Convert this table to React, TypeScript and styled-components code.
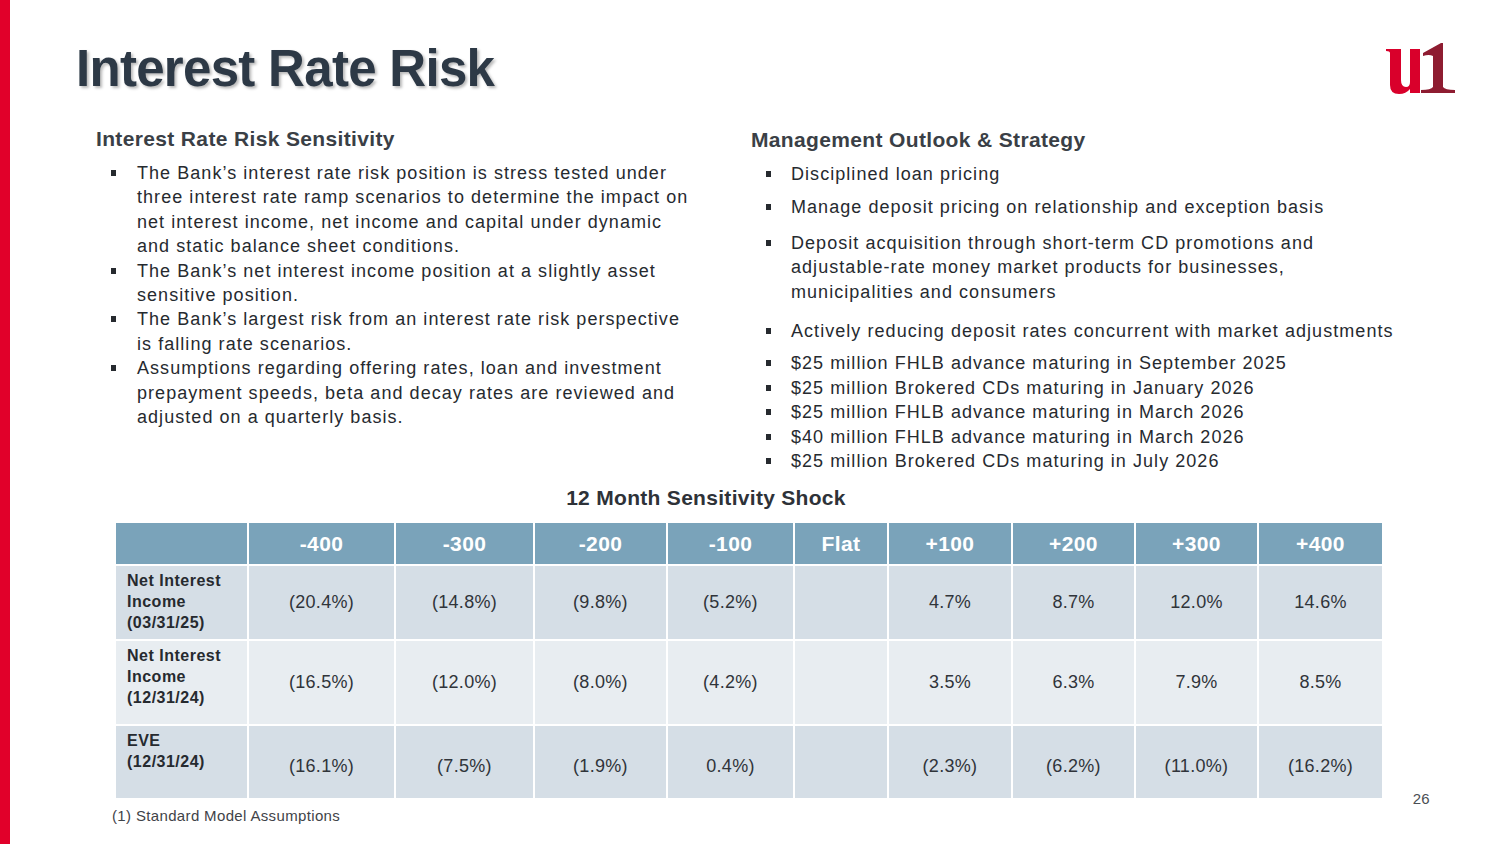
import styled, { createGlobalStyle } from 'styled-components'

const GlobalStyle = createGlobalStyle`
    html, body {
        margin: 0;
        padding: 0;
        background: #ffffff;
    }
    body {
        font-family: "Liberation Sans", Arial, sans-serif;
        color: #262a2f;
    }
`

const Slide = styled.div`
    display: flex;
    width: 1500px;
    height: 844px;
    overflow: hidden;
    background: #ffffff;
`

const RedBar = styled.div`
    width: 10px;
    flex: none;
    background: #e1002a;
`

const Content = styled.div`
    flex: 1;
    display: flex;
    flex-direction: column;
`

const Header = styled.div`
    display: flex;
    justify-content: space-between;
    align-items: flex-start;
    padding: 43px 43px 0 66px;
`

const Title = styled.h1`
    margin: 0;
    font-size: 51px;
    line-height: 51px;
    font-weight: 700;
    letter-spacing: -0.7px;
    color: #2d3946;
    text-shadow: 2px 2px 3px rgba(0, 0, 0, 0.28);
`

const Columns = styled.div`
    display: grid;
    grid-template-columns: 655px 1fr;
    margin-top: 32px;
    padding-left: 86px;
`

const Column = styled.div`
    display: flex;
    flex-direction: column;
`

const SectionHeading = styled.h2<{ $top?: number }>`
    margin: ${p => p.$top || 0}px 0 0 0;
    font-size: 21px;
    line-height: 24px;
    font-weight: 700;
    letter-spacing: 0.35px;
    color: #3a3f46;
`

const List = styled.ul<{ $top: number; $indent: number }>`
    list-style: none;
    margin: ${p => p.$top}px 0 0 0;
    padding: 0 0 0 ${p => p.$indent}px;
`

const Item = styled.li<{ $gap?: number; $textGap: number }>`
    display: flex;
    align-items: flex-start;
    gap: ${p => p.$textGap}px;
    margin-top: ${p => p.$gap || 0}px;
    font-size: 18px;
    line-height: 24.4px;
    letter-spacing: 1.05px;
    white-space: nowrap;
    color: #262a2f;
`

const Marker = styled.span`
    flex: none;
    width: 5px;
    height: 6px;
    margin-top: 9px;
    background: #262a2f;
`

const ShockTitle = styled.div`
    margin-top: 13px;
    padding-left: 96px;
    text-align: center;
    width: 1200px;
    font-size: 21px;
    line-height: 24px;
    font-weight: 700;
    letter-spacing: 0.3px;
    color: #2e3238;
`

const Table = styled.div`
    display: grid;
    grid-template-columns: 131px 145px 137px 131px 125px 92px 122px 121px 121px 123px;
    grid-template-rows: 41px 73px 83px 72px;
    column-gap: 2px;
    row-gap: 2px;
    width: 1266px;
    margin: 13px 0 0 106px;
    background: #ffffff;
`

const HeadCell = styled.div`
    display: flex;
    align-items: center;
    justify-content: center;
    background: #7aa3ba;
    color: #ffffff;
    font-size: 21px;
    font-weight: 700;
    letter-spacing: 0.4px;
`

const LabelCell = styled.div<{ $tone: string }>`
    background: ${p => p.$tone};
    padding: 4px 11px 0;
    font-size: 16px;
    line-height: 21px;
    font-weight: 700;
    letter-spacing: 0.5px;
    color: #262a2f;
`

const ValueCell = styled.div<{ $tone: string; $shift?: number }>`
    display: flex;
    align-items: center;
    justify-content: center;
    padding-top: ${p => p.$shift || 0}px;
    background: ${p => p.$tone};
    font-size: 18px;
    letter-spacing: 0.3px;
    color: #30343a;
`

const Footer = styled.div`
    display: flex;
    align-items: flex-start;
    justify-content: space-between;
    width: 1318px;
    padding-left: 102px;
`

const Footnote = styled.div`
    margin-top: 9px;
    font-size: 15px;
    line-height: 18px;
    letter-spacing: 0.35px;
    color: #3f4348;
`

const PageNum = styled.div`
    margin-top: -8px;
    font-size: 15px;
    line-height: 18px;
    letter-spacing: 0.3px;
    color: #4a4e53;
`

const Logo = () => (
    <svg width="72" height="52" viewBox="0 0 72 52">
        <path
            d="M1,6 H16 V37 Q16,44 21,44 Q25,44 25,39 V6 H35 V50 H25 V46 Q21,51 14,51 Q5,51 5,42 V10 Q5,8 1,8 Z"
            fill="#d9002b"
        />
        <path
            d="M36,50 V47 Q46,47 48,44 V13 Q44,11 38,13 V10 L56,0 H58 V44 Q60,47 70,47 V50 Z"
            fill="#8e1c31"
        />
    </svg>
)

const leftItems = [
    [
        'The Bank\u2019s interest rate risk position is stress tested under',
        'three interest rate ramp scenarios to determine the impact on',
        'net interest income, net income and capital under dynamic',
        'and static balance sheet conditions.',
    ],
    ['The Bank\u2019s net interest income position at a slightly asset', 'sensitive position.'],
    ['The Bank\u2019s largest risk from an interest rate risk perspective', 'is falling rate scenarios.'],
    [
        'Assumptions regarding offering rates, loan and investment',
        'prepayment speeds, beta and decay rates are reviewed and',
        'adjusted on a quarterly basis.',
    ],
]

const rightItems: { lines: string[]; gap: number }[] = [
    { lines: ['Disciplined loan pricing'], gap: 0 },
    { lines: ['Manage deposit pricing on relationship and exception basis'], gap: 9 },
    {
        lines: [
            'Deposit acquisition through short-term CD promotions and',
            'adjustable-rate money market products for businesses,',
            'municipalities and consumers',
        ],
        gap: 11,
    },
    { lines: ['Actively reducing deposit rates concurrent with market adjustments'], gap: 15 },
    { lines: ['$25 million FHLB advance maturing in September 2025'], gap: 8 },
    { lines: ['$25 million Brokered CDs maturing in January 2026'], gap: 0 },
    { lines: ['$25 million FHLB advance maturing in March 2026'], gap: 0 },
    { lines: ['$40 million FHLB advance maturing in March 2026'], gap: 0 },
    { lines: ['$25 million Brokered CDs maturing in July 2026'], gap: 0 },
]

const heads = ['-400', '-300', '-200', '-100', 'Flat', '+100', '+200', '+300', '+400']

const rows = [
    {
        label: ['Net Interest', 'Income', '(03/31/25)'],
        tone: '#d5dee6',
        shift: 0,
        values: ['(20.4%)', '(14.8%)', '(9.8%)', '(5.2%)', '', '4.7%', '8.7%', '12.0%', '14.6%'],
    },
    {
        label: ['Net Interest', 'Income', '(12/31/24)'],
        tone: '#e8edf1',
        shift: 0,
        values: ['(16.5%)', '(12.0%)', '(8.0%)', '(4.2%)', '', '3.5%', '6.3%', '7.9%', '8.5%'],
    },
    {
        label: ['EVE', '(12/31/24)'],
        tone: '#d5dee6',
        shift: 8,
        values: ['(16.1%)', '(7.5%)', '(1.9%)', '0.4%)', '', '(2.3%)', '(6.2%)', '(11.0%)', '(16.2%)'],
    },
]

const Lines = ({ lines }: { lines: string[] }) => (
    <span>
        {lines.map((l, i) => (
            <span key={i}>
                {i > 0 && <br />}
                {l}
            </span>
        ))}
    </span>
)

const App = () => {
    return (
        <>
            <GlobalStyle />
            <Slide>
                <RedBar />
                <Content>
                    <Header>
                        <Title>Interest Rate Risk</Title>
                        <Logo />
                    </Header>

                    <Columns>
                        <Column>
                            <SectionHeading>Interest Rate Risk Sensitivity</SectionHeading>
                            <List $top={10} $indent={15}>
                                {leftItems.map((lines, i) => (
                                    <Item key={i} $textGap={21}>
                                        <Marker />
                                        <Lines lines={lines} />
                                    </Item>
                                ))}
                            </List>
                        </Column>
                        <Column>
                            <SectionHeading $top={1}>Management Outlook &amp; Strategy</SectionHeading>
                            <List $top={10} $indent={15}>
                                {rightItems.map((it, i) => (
                                    <Item key={i} $gap={it.gap} $textGap={20}>
                                        <Marker />
                                        <Lines lines={it.lines} />
                                    </Item>
                                ))}
                            </List>
                        </Column>
                    </Columns>

                    <ShockTitle>12 Month Sensitivity Shock</ShockTitle>

                    <Table>
                        <HeadCell />
                        {heads.map(h => (
                            <HeadCell key={h}>{h}</HeadCell>
                        ))}
                        {rows.map((r, ri) => [
                            <LabelCell key={'l' + ri} $tone={r.tone}>
                                <Lines lines={r.label} />
                            </LabelCell>,
                            ...r.values.map((v, vi) => (
                                <ValueCell key={ri + '-' + vi} $tone={r.tone} $shift={r.shift}>
                                    {v}
                                </ValueCell>
                            )),
                        ])}
                    </Table>

                    <Footer>
                        <Footnote>(1) Standard Model Assumptions</Footnote>
                        <PageNum>26</PageNum>
                    </Footer>
                </Content>
            </Slide>
        </>
    )
}

export default App
